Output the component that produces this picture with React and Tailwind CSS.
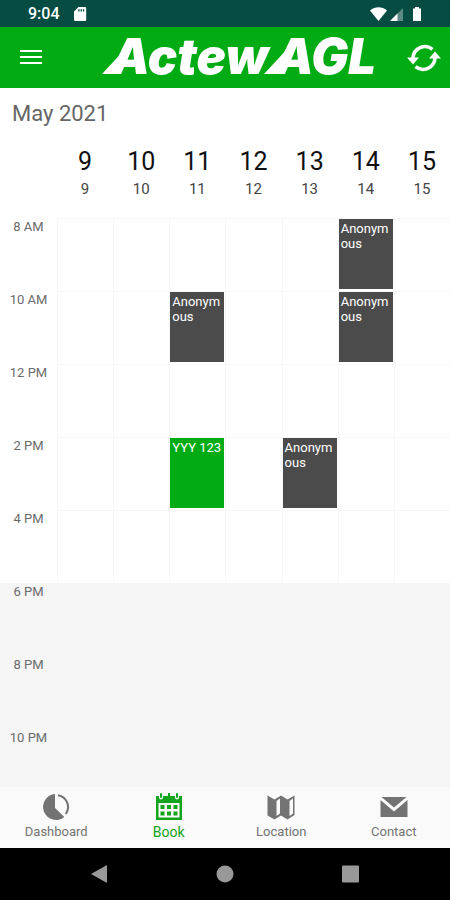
import React from "react";

const days = [9, 10, 11, 12, 13, 14, 15];

const rows = [
  { label: "8 AM", events: { 14: "Anonymous" } },
  { label: "10 AM", events: { 11: "Anonymous", 14: "Anonymous" } },
  { label: "12 PM", events: {} },
  { label: "2 PM", events: { 11: "YYY 123", 13: "Anonymous" } },
  { label: "4 PM", events: {} },
  { label: "6 PM", events: {}, closed: true },
  { label: "8 PM", events: {}, closed: true },
  { label: "10 PM", events: {}, closed: true },
];

function StatusBar() {
  return (
    <div className="flex h-[27px] shrink-0 items-center bg-[#064c43] pl-7 pr-7 text-white">
      <span className="text-base font-medium">9:04</span>
      <svg className="ml-3 h-4 w-4" viewBox="0 0 16 16" fill="currentColor" aria-hidden="true">
        <path
          fillRule="evenodd"
          d="M6.5 1H13a1.2 1.2 0 0 1 1.2 1.2v11.6A1.2 1.2 0 0 1 13 15H3.200A1.200 1.200 0 0 1 2 13.800V5.500zM6.300 3.200v2.300h1.300V3.200zM8.600 3.200v2.300h1.300V3.200zM10.900 3.200v2.300h1.300V3.200z"
        />
      </svg>
      <svg className="ml-auto h-4 w-[54px]" viewBox="0 0 54 16" fill="#fff" aria-hidden="true">
        <path d="M2 4.500C7 .2 14 .2 19 4.500L10.500 15z" />
        <path d="M35 2v13H22z" opacity=".35" />
        <path d="M29.500 7.500V15H22z" />
        <path d="M45 2.500h2V1h4v1.500h2V15h-8z" />
      </svg>
    </div>
  );
}

function Logo() {
  return (
    <svg className="h-[61px] w-[308px] shrink-0" viewBox="0 0 308 61" role="img" aria-label="ActewAGL" fill="#fff">
      <g className="font-['Inter',sans-serif] text-[49px] font-black italic">
        <text x="41" y="47">Actew</text>
        <text x="306" y="47" textAnchor="end">AGL</text>
      </g>
      <path d="M32 47L58 19 66 13 58 30 44 47z" />
      <path d="M194 47L220 19 228 13 220 30 206 47z" />
    </svg>
  );
}

function Header() {
  return (
    <header className="flex h-[61px] shrink-0 items-center justify-between bg-[#00ab14] pl-5 pr-2 text-white">
      <button type="button" aria-label="Menu" className="shrink-0">
        <svg className="h-[22px] w-[22px]" viewBox="0 0 22 22" stroke="currentColor" strokeWidth="2" aria-hidden="true">
          <path d="M0 4h22M0 10h22M0 16h22" />
        </svg>
      </button>
      <Logo />
      <button type="button" aria-label="Refresh" className="shrink-0">
        <svg className="h-9 w-9" viewBox="0 0 36 36" fill="none" stroke="currentColor" strokeWidth="3.600" aria-hidden="true">
          <path d="M26.500 9.300A12 12 0 0 0 7 18" />
          <path d="M9.500 26.700A12 12 0 0 0 29 18" />
          <path d="M1 17.500h12L7 24.500zM35 18.500H23L29 11.500z" fill="currentColor" stroke="none" />
        </svg>
      </button>
    </header>
  );
}

function Event({ title }) {
  const own = title !== "Anonymous";
  return (
    <button
      type="button"
      className={
        "flex h-[70px] w-full items-start break-all p-0.5 text-left text-[13px] leading-[15px] text-white " +
        (own ? "bg-[#00ab14]" : "bg-[#4b4b4b]")
      }
    >
      {title}
    </button>
  );
}

function Calendar() {
  return (
    <main className="flex flex-1 flex-col bg-white">
      <h1 className="px-3 pt-3 text-[22px] leading-7 text-[#666]">May 2021</h1>
      <div className="flex h-[90px] pl-[57px] pt-5">
        {days.map((d) => (
          <div key={d} className="flex min-w-0 flex-1 flex-col items-center text-[#111]">
            <span className="text-[25px] leading-7">{d}</span>
            <span className="text-[15px] leading-[26px] text-[#444]">{d}</span>
          </div>
        ))}
      </div>
      <div className="flex flex-1 flex-col">
        {rows.map((row, i) => (
          <div
            key={row.label}
            className={
              "flex " +
              (i === rows.length - 1 ? "min-h-[58px] flex-1 " : "h-[73px] ") +
              (row.closed ? "bg-[#f5f5f5]" : "bg-white")
            }
          >
            <div className="w-[57px] shrink-0 text-center text-[13px] leading-[18px] text-[#6b6b6b]">
              {row.label}
            </div>
            {days.map((d) => (
              <div
                key={d}
                className={
                  "min-w-0 flex-1 border-l border-t pr-px " +
                  (row.closed ? "border-transparent" : "border-[#f7f7f7]")
                }
              >
                {row.events[d] && <Event title={row.events[d]} />}
              </div>
            ))}
          </div>
        ))}
      </div>
    </main>
  );
}

function DashboardIcon() {
  return (
    <svg className="h-7 w-7" viewBox="0 0 28 28" aria-hidden="true">
      <path d="M13 1v14l9.300 9A13 13 0 1 1 13 1z" fill="currentColor" />
      <path d="M16 2.200A12 12 0 0 1 23.800 21" fill="none" stroke="currentColor" strokeWidth="2" />
    </svg>
  );
}

function BookIcon() {
  return (
    <svg className="h-7 w-7" viewBox="0 0 28 28" aria-hidden="true">
      <path
        fill="currentColor"
        fillRule="evenodd"
        d="M1 3h3v1.500a2 2 0 0 0 4 0V3h12v1.500a2 2 0 0 0 4 0V3h3v24H1zM3.500 10v14.500h21V10z"
      />
      <path d="M6 1v3M22 1v3M14 0v3" stroke="currentColor" strokeWidth="2" strokeLinecap="round" />
      <path
        fill="currentColor"
        d="M5.500 12h4v4h-4zM12 12h4v4h-4zM18.500 12h4v4h-4zM5.500 18.500h4v4h-4zM12 18.500h4v4h-4zM18.500 18.500h4v4h-4z"
      />
    </svg>
  );
}

function LocationIcon() {
  return (
    <svg className="h-7 w-7" viewBox="0 0 28 28" aria-hidden="true">
      <path
        fill="currentColor"
        fillRule="evenodd"
        d="M.5 2.500L7.500 6.500 14 2.500 20.500 6.500 27.500 2.500V22L20.500 26.500 14 22.500 7.500 26.500.5 22.500zM9.500 8V23L13 20.500V5.500zM22.500 8V23L26 20.500V5.500z"
      />
    </svg>
  );
}

function ContactIcon() {
  return (
    <svg className="h-7 w-7" viewBox="0 0 28 28" fill="currentColor" aria-hidden="true">
      <path d="M1.500 4h25L14 14.500z" />
      <path d="M.5 7L14 18.500 27.500 7v17H.5z" />
    </svg>
  );
}

const tabs = [
  { label: "Dashboard", Icon: DashboardIcon },
  { label: "Book", Icon: BookIcon, active: true },
  { label: "Location", Icon: LocationIcon },
  { label: "Contact", Icon: ContactIcon },
];

export default function App() {
  return (
    <div className="flex min-h-screen flex-col font-['Roboto',sans-serif]">
      <StatusBar />
      <Header />
      <Calendar />
      <nav className="flex h-[61px] shrink-0 bg-[#fafafa]">
        {tabs.map(({ label, Icon, active }) => (
          <a
            key={label}
            href="#"
            className={
              "flex flex-1 flex-col items-center pt-1.5 " +
              (active ? "text-sm leading-[22px] text-[#12a41c]" : "text-[13px] leading-[22px] text-[#737373]")
            }
          >
            <Icon />
            <span>{label}</span>
          </a>
        ))}
      </nav>
      <div className="flex h-[52px] shrink-0 items-center justify-around bg-black px-9 text-[#999]">
        <button type="button" aria-label="Back">
          <svg className="h-5 w-5" viewBox="0 0 20 20" fill="currentColor"><path d="M18 1v18L2 10z" /></svg>
        </button>
        <button type="button" aria-label="Home">
          <svg className="h-5 w-5" viewBox="0 0 20 20" fill="currentColor"><circle cx="10" cy="10" r="8.500" /></svg>
        </button>
        <button type="button" aria-label="Recent apps">
          <svg className="h-5 w-5" viewBox="0 0 20 20" fill="currentColor"><rect x="1" y="1.500" width="17" height="17" rx="1" /></svg>
        </button>
      </div>
    </div>
  );
}
